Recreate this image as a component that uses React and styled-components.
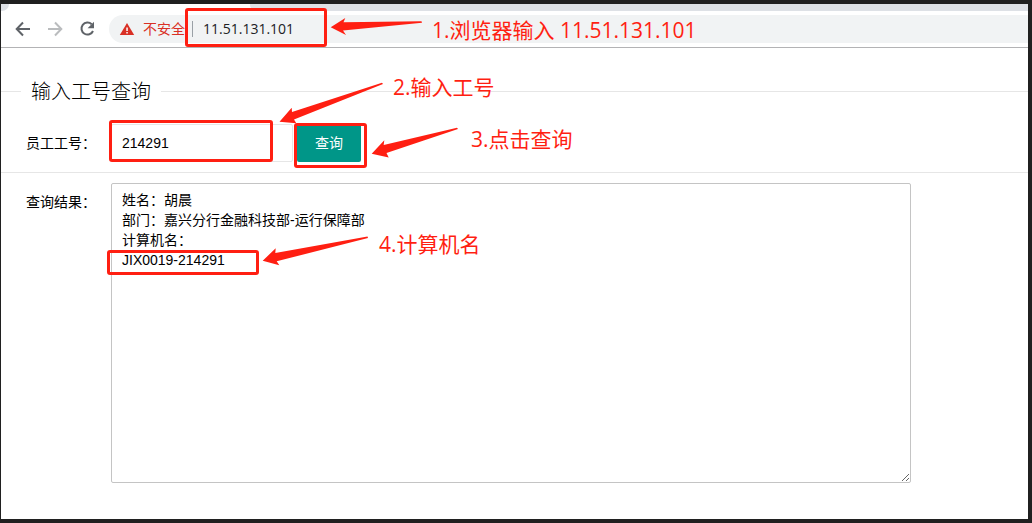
import React from "react";
import styled, { createGlobalStyle } from "styled-components";

const uiFont = '"Open Sans", "Noto Sans CJK SC", sans-serif';
const pageFont = '"Liberation Sans", "Noto Sans CJK SC", sans-serif';
const red = "#ff1f12";

const GlobalStyle = createGlobalStyle`
  *, *::before, *::after { box-sizing: border-box; }
  body { margin: 0; background: #fff; font-family: ${pageFont}; font-size: 14px; color: #000; }
`;

const Window = styled.div`
  position: relative;
  min-height: 100vh;
  border: solid #202020;
  border-width: 4px 4px 4px 1px;
  background: #fff;
  overflow: hidden;
`;

const TabStrip = styled.div`
  display: flex;
  height: 7px;
  background: #fff;
`;

const TabEdge = styled.div`
  width: 8px;
  background: #dee1e6;
  border-bottom-right-radius: 7px;
`;

const ActiveTab = styled.div`
  width: 241px;
`;

const TabRest = styled.div`
  flex: 1;
  background: #dee1e6;
  border-bottom-left-radius: 6px;
`;

const Toolbar = styled.nav`
  display: flex;
  align-items: center;
  height: 37px;
  padding-left: 12px;
  border-bottom: 1px solid #b3b3b5;
`;

const NavButton = styled.button`
  display: flex;
  align-items: center;
  justify-content: center;
  width: 20px;
  height: 28px;
  margin-right: 12px;
  padding: 0;
  border: 0;
  background: none;
  color: ${(p) => (p.disabled ? "#babcbe" : "#5f6368")};
`;

const AddressBar = styled.div`
  display: flex;
  align-items: center;
  flex: 1;
  height: 28px;
  padding-left: 10px;
  border-radius: 14px 0 0 14px;
  background: #f1f3f4;
  font-family: ${uiFont};
  font-size: 14px;
`;

const Insecure = styled.span`
  margin-left: 8px;
  padding-bottom: 2px;
  color: #d93025;
  white-space: nowrap;
`;

const Divider = styled.span`
  width: 1px;
  height: 16px;
  margin: 0 10px 0 7px;
  background: #9aa0a6;
`;

const UrlInput = styled.input`
  flex: 1;
  min-width: 0;
  height: 24px;
  padding: 0 0 2px;
  border: 0;
  outline: 0;
  background: transparent;
  color: #202124;
  font: inherit;
`;

const QueryForm = styled.form`
  display: block;
  padding-top: 28px;
`;

const Heading = styled.h1`
  display: flex;
  align-items: center;
  gap: 10px;
  margin: 0;
  height: 30px;
  font-size: 20px;
  font-weight: 300;

  &::before,
  &::after {
    content: "";
    height: 1px;
    background: #e6e6e6;
  }
  &::before { width: 20px; }
  &::after { flex: 1; }
`;

const HeadingText = styled.span`
  padding-bottom: 2px;
`;

const QueryRow = styled.div`
  display: flex;
  padding: 18px 0 10px;
  border-bottom: 1px solid #e6e6e6;
`;

const ResultRow = styled.div`
  display: flex;
  padding-top: 10px;
`;

const Label = styled.label`
  flex: none;
  width: 110px;
  padding: 9px 15px;
  line-height: 20px;
  text-align: right;
  white-space: nowrap;
`;

const NumberInput = styled.input`
  width: 182px;
  height: 38px;
  padding: 0 10px;
  border: 1px solid #e6e6e6;
  border-radius: 2px;
  outline: 0;
  font: inherit;
  color: inherit;
`;

const QueryButton = styled.button`
  width: 64px;
  height: 38px;
  margin-left: 4px;
  padding: 0 0 2px;
  border: 0;
  border-radius: 2px;
  background: #009688;
  color: #fff;
  font: inherit;
`;

const Result = styled.textarea`
  flex: 0 1 800px;
  min-width: 0;
  height: 300px;
  padding: 6px 10px;
  border: 1px solid #c4c4c4;
  border-radius: 2px;
  outline: 0;
  font: inherit;
  line-height: 20px;
  color: inherit;
`;

const Layer = styled.div`
  position: absolute;
  top: -4px;
  left: -1px;
  pointer-events: none;
`;

const Mark = styled.div`
  position: absolute;
  left: ${(p) => p.$x}px;
  top: ${(p) => p.$y}px;
  width: ${(p) => p.$w}px;
  height: ${(p) => p.$h}px;
  border: 3px solid ${red};
  border-radius: 3px;
`;

const Note = styled.span`
  position: absolute;
  left: ${(p) => p.$x}px;
  top: ${(p) => p.$y}px;
  color: ${red};
  font-family: ${uiFont};
  font-size: 21px;
  line-height: 28px;
  white-space: nowrap;
`;

const Arrows = styled.svg`
  position: absolute;
  left: 0;
  top: 0;
  fill: ${red};
`;

const marks = [
  [185, 8, 142, 39],
  [109, 120, 164, 42],
  [294, 123, 73, 45],
  [107, 250, 152, 25],
];

const notes = [
  [432, 16, "1.浏览器输入 11.51.131.101"],
  [393, 73, "2.输入工号"],
  [471, 125, "3.点击查询"],
  [379, 230, "4.计算机名"],
];

const arrows = [
  "M330.7 27.3 345.3 18 343.5 22.3 421.5 21.3 422 22.8 343 30.5 346 35Z",
  "M279.5 121.7 291.7 107.7 292 112 382 82.8 383 84 294 119.5 296.3 123.3Z",
  "M371.7 153.7 384.3 140.3 383.7 145 457 127.8 458 129 386.5 153 388.7 157.5Z",
  "M262.7 260.7 275.7 248.3 275.3 253 367.5 236.6 368 238 276.7 261.3 279.3 265.3Z",
];

const resultText =
  "姓名：胡晨\n部门：嘉兴分行金融科技部-运行保障部\n计算机名：\nJIX0019-214291";

export default function App() {
  return (
    <>
      <GlobalStyle />
      <Window>
        <TabStrip>
          <TabEdge />
          <ActiveTab />
          <TabRest />
        </TabStrip>
        <Toolbar>
          <NavButton type="button" aria-label="后退">
            <svg width="20" height="20" viewBox="0 0 20 20" fill="none" stroke="currentColor" strokeWidth="2">
              <path d="M17 10H4M10 3.5 3.7 10 10 16.5" />
            </svg>
          </NavButton>
          <NavButton type="button" aria-label="前进" disabled>
            <svg width="20" height="20" viewBox="0 0 20 20" fill="none" stroke="currentColor" strokeWidth="2">
              <path d="M3 10H16M10 3.5 16.3 10 10 16.5" />
            </svg>
          </NavButton>
          <NavButton type="button" aria-label="重新加载">
            <svg width="20" height="20" viewBox="0 0 20 20">
              <path
                d="M14.7 5.3A6 6 0 1 0 16 12"
                fill="none"
                stroke="currentColor"
                strokeWidth="2"
              />
              <path d="M17 2.8V9.2H10.6Z" fill="currentColor" />
            </svg>
          </NavButton>
          <AddressBar>
            <svg width="16" height="14" viewBox="0 0 16 14" aria-hidden="true">
              <path d="M8 1 15.2 13H.8Z" fill="#d93025" />
              <path d="M7.3 5.5h1.5v3.4H7.3zM7.3 10h1.5v1.5H7.3z" fill="#fff" />
            </svg>
            <Insecure>不安全</Insecure>
            <Divider />
            <UrlInput aria-label="地址" defaultValue="11.51.131.101" />
          </AddressBar>
        </Toolbar>

        <QueryForm onSubmit={(e) => e.preventDefault()}>
          <Heading>
            <HeadingText>输入工号查询</HeadingText>
          </Heading>
          <QueryRow>
            <Label htmlFor="staff">员工工号：</Label>
            <NumberInput id="staff" defaultValue="214291" />
            <QueryButton type="submit">查询</QueryButton>
          </QueryRow>
          <ResultRow>
            <Label htmlFor="result">查询结果：</Label>
            <Result id="result" defaultValue={resultText} />
          </ResultRow>
        </QueryForm>

        <Layer>
          <Arrows width="480" height="280" aria-hidden="true">
            {arrows.map((d) => (
              <path key={d} d={d} />
            ))}
          </Arrows>
          {marks.map(([x, y, w, h]) => (
            <Mark key={y} $x={x} $y={y} $w={w} $h={h} />
          ))}
          {notes.map(([x, y, text]) => (
            <Note key={text} $x={x} $y={y}>
              {text}
            </Note>
          ))}
        </Layer>
      </Window>
    </>
  );
}
